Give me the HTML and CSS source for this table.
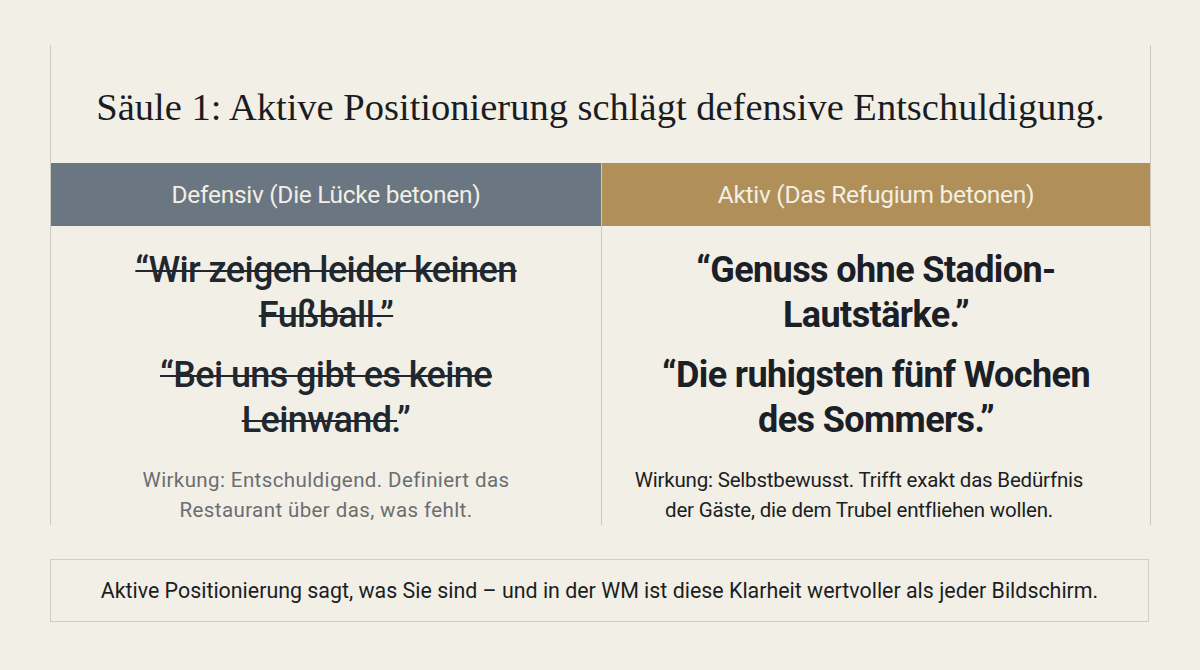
FILE: index.html
```html
<!DOCTYPE html>
<html lang="de">
<head>
<meta charset="utf-8">
<title>Säule 1</title>
<link rel="stylesheet" href="styles.css">
</head>
<body>
<main class="slide">
  <section class="frame">
    <h1 class="title">Säule 1: Aktive Positionierung schlägt defensive Entschuldigung.</h1>
    <div class="cols">
      <div class="col col-def">
        <div class="head head-def">Defensiv (Die Lücke betonen)</div>
        <div class="body">
          <p class="quote struck">“Wir zeigen leider keinen Fußball.”</p>
          <p class="quote struck-part"><span class="strike">“Bei uns gibt es keine Leinwand.</span>”</p>
          <p class="effect effect-def">Wirkung: Entschuldigend. Definiert das Restaurant über das, was fehlt.</p>
        </div>
      </div>
      <div class="col col-act">
        <div class="head head-act">Aktiv (Das Refugium betonen)</div>
        <div class="body">
          <p class="quote strong">“Genuss ohne Stadion-Lautstärke.”</p>
          <p class="quote strong">“Die ruhigsten fünf Wochen des Sommers.”</p>
          <p class="effect effect-act">Wirkung: Selbstbewusst. Trifft exakt das Bedürfnis der Gäste, die dem Trubel entfliehen wollen.</p>
        </div>
      </div>
    </div>
  </section>
  <footer class="summary">Aktive Positionierung sagt, was Sie sind – und in der WM ist diese Klarheit wertvoller als jeder Bildschirm.</footer>
</main>
</body>
</html>
```

FILE: styles.css
```css
html, body {
  margin: 0;
  padding: 0;
  background: #f2efe7;
}
body {
  width: 1200px;
  height: 670px;
  overflow: hidden;
  font-family: Roboto, "Liberation Sans", sans-serif;
  color: #1b1f24;
}
.slide {
  padding: 45px 50px 0 50px;
}
.frame {
  width: 1099px;
  border-left: 1.5px solid #cdc9bf;
  border-right: 1.5px solid #cdc9bf;
  height: 480px;
  display: flex;
  flex-direction: column;
}
.title {
  margin: 0;
  height: 119px;
  display: flex;
  align-items: center;
  justify-content: center;
  font-family: "Liberation Serif", "DejaVu Serif", serif;
  font-weight: 400;
  font-size: 38.5px;
  letter-spacing: 0;
  color: #1a1c1f;
  padding-top: 6px;
  box-sizing: border-box;
  white-space: nowrap;
}
.cols {
  flex: 1;
  display: grid;
  grid-template-columns: 550px 1fr;
}
.col {
  display: flex;
  flex-direction: column;
}
.col-act {
  border-left: 1.5px solid #cdc9bf;
}
.head {
  height: 63px;
  display: flex;
  align-items: center;
  justify-content: center;
  font-size: 24.5px;
  letter-spacing: -0.3px;
  color: #f3efe4;
}
.head-def { background: #6a7681; }
.head-act { background: #b08f58; }
.body {
  padding: 22px 20px 0;
  text-align: center;
}
.quote {
  margin: 0 0 15px;
  font-size: 36px;
  line-height: 45px;
  letter-spacing: -0.6px;
}
.struck,
.struck-part {
  font-weight: 500;
  color: #20272e;
  padding: 0 50px;
}
.struck,
.struck-part .strike {
  text-decoration: line-through;
  text-decoration-thickness: 2px;
}
.strong {
  font-weight: 700;
  color: #1b2026;
  padding: 0 40px;
}
.effect {
  margin: 22px auto 0;
  font-size: 20.5px;
  line-height: 30px;
  letter-spacing: -0.2px;
}
.effect-def {
  color: #6b6e71;
  max-width: 410px;
  letter-spacing: 0.4px;
}
.effect-act {
  color: #1b1e22;
  max-width: 462px;
  padding-right: 34px;
}
.summary {
  margin-top: 34px;
  width: 1099px;
  height: 63px;
  box-sizing: border-box;
  border: 1.5px solid #d2cec4;
  display: flex;
  align-items: center;
  justify-content: center;
  font-size: 21.4px;
  letter-spacing: 0;
  color: #1b1e22;
  white-space: nowrap;
}
```
